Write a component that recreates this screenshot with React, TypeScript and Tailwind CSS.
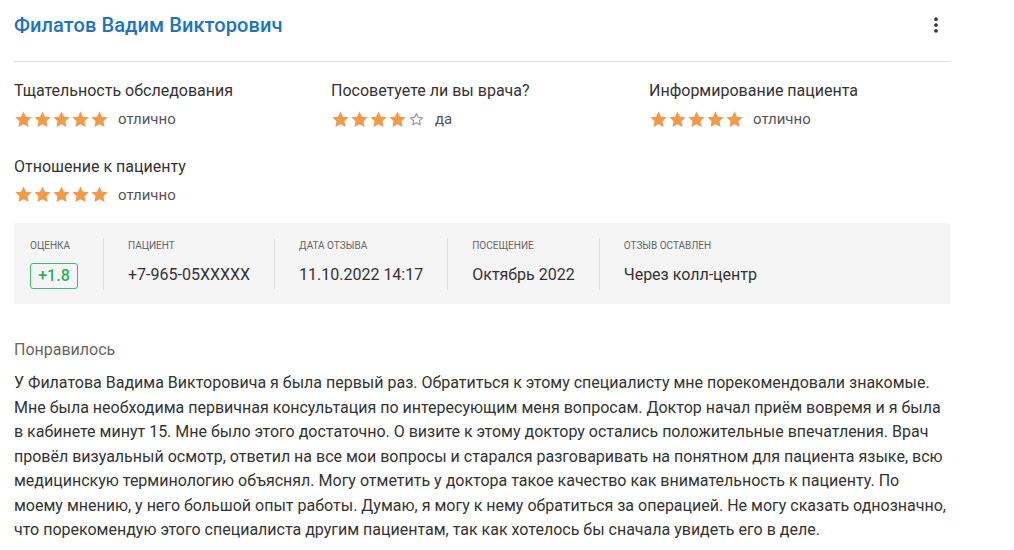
import { MoreVertical } from "lucide-react";

interface Rating {
  label: string
  stars: number
  text: string
}

const ratings: Rating[] = [
  { label: "Тщательность обследования", stars: 5, text: "отлично" },
  { label: "Посоветуете ли вы врача?", stars: 4, text: "да" },
  { label: "Информирование пациента", stars: 5, text: "отлично" },
  { label: "Отношение к пациенту", stars: 5, text: "отлично" }
];

const info = [
  { label: "Пациент", value: "+7-965-05XXXXX" },
  { label: "Дата отзыва", value: "11.10.2022 14:17" },
  { label: "Посещение", value: "Октябрь 2022" },
  { label: "Отзыв оставлен", value: "Через колл-центр" }
];

const FullStar = () => (
  <svg viewBox="0 0 24 24" className="w-[19px] h-[19px]" fill="#f2994a">
    <path d="M12 1.8l3.1 6.6 7.2.9-5.3 5 1.4 7.1L12 17.9l-6.4 3.5 1.4-7.1-5.3-5 7.2-.9z" />
  </svg>
);

const EmptyStar = () => (
  <svg viewBox="0 0 24 24" className="w-[15px] h-[15px] mx-[2px]" fill="none" stroke="#9e9e9e" strokeWidth="2">
    <path d="M12 2.5l2.9 6.1 6.7.8-4.9 4.6 1.3 6.6L12 17.3l-6 3.3 1.3-6.6-4.9-4.6 6.7-.8z" strokeLinejoin="round" />
  </svg>
);

const Stars = ({ count }: { count: number }) => (
  <div className="flex items-center">
    {[0, 1, 2, 3, 4].map((i) => (i < count ? <FullStar key={i} /> : <EmptyStar key={i} />))}
  </div>
);

const App = () => {
  return (
    <div className="bg-white min-h-[550px] pl-[14px] pt-[12px] font-['Roboto',sans-serif] text-[#333]">
      <div className="w-[936px]">
        <div className="flex items-center justify-between h-[26px]">
          <h1 className="text-[20px] font-medium text-[#1a73c4] tracking-[0.1px]">Филатов Вадим Викторович</h1>
          <MoreVertical className="w-[20px] h-[20px] text-[#333] mr-[4px]" strokeWidth={2.5} />
        </div>

        <div className="mt-[23px] border-t border-[#dedede]" />

        <div className="grid grid-cols-[317px_318px_1fr] gap-y-[25px] pt-[18px]">
          {ratings.map((r) => (
            <div key={r.label}>
              <div className="text-[16px] leading-[22px] text-[#333]">{r.label}</div>
              <div className="flex items-center gap-[9px] mt-[6px]">
                <Stars count={r.stars} />
                <span className="text-[15px] text-[#555]">{r.text}</span>
              </div>
            </div>
          ))}
        </div>

        <div className="mt-[17px] bg-[#f5f5f5] h-[81px] flex items-center px-[16px]">
          <div className="pr-[25px] h-[50px] flex flex-col">
            <div className="text-[10px] uppercase text-[#666] leading-[14px]">Оценка</div>
            <div className="mt-[10px] w-[48px] h-[26px] border border-[#3dbb6f] rounded-[3px] flex items-center justify-center text-[16px] font-medium text-[#2fae5f]">
              +1.8
            </div>
          </div>
          {info.map((c) => (
            <div key={c.label} className="border-l border-[#dcdcdc] px-[24px] h-[50px] flex flex-col">
              <div className="text-[10px] uppercase text-[#666] leading-[14px]">{c.label}</div>
              <div className="mt-[12px] text-[16px] text-[#333] leading-[20px]">{c.value}</div>
            </div>
          ))}
        </div>

        <div className="mt-[36px] text-[16px] text-[#666] leading-[20px]">Понравилось</div>
        <p className="mt-[11px] text-[16px] leading-[24.5px] text-[#333]">
          У Филатова Вадима Викторовича я была первый раз. Обратиться к этому специалисту мне порекомендовали знакомые. Мне была необходима первичная консультация по интересующим меня вопросам. Доктор начал приём вовремя и я была в кабинете минут 15. Мне было этого достаточно. О визите к этому доктору остались положительные впечатления. Врач провёл визуальный осмотр, ответил на все мои вопросы и старался разговаривать на понятном для пациента языке, всю медицинскую терминологию объяснял. Могу отметить у доктора такое качество как внимательность к пациенту. По моему мнению, у него большой опыт работы. Думаю, я могу к нему обратиться за операцией. Не могу сказать однозначно, что порекомендую этого специалиста другим пациентам, так как хотелось бы сначала увидеть его в деле.
        </p>
      </div>
    </div>
  );
};

export default App;
